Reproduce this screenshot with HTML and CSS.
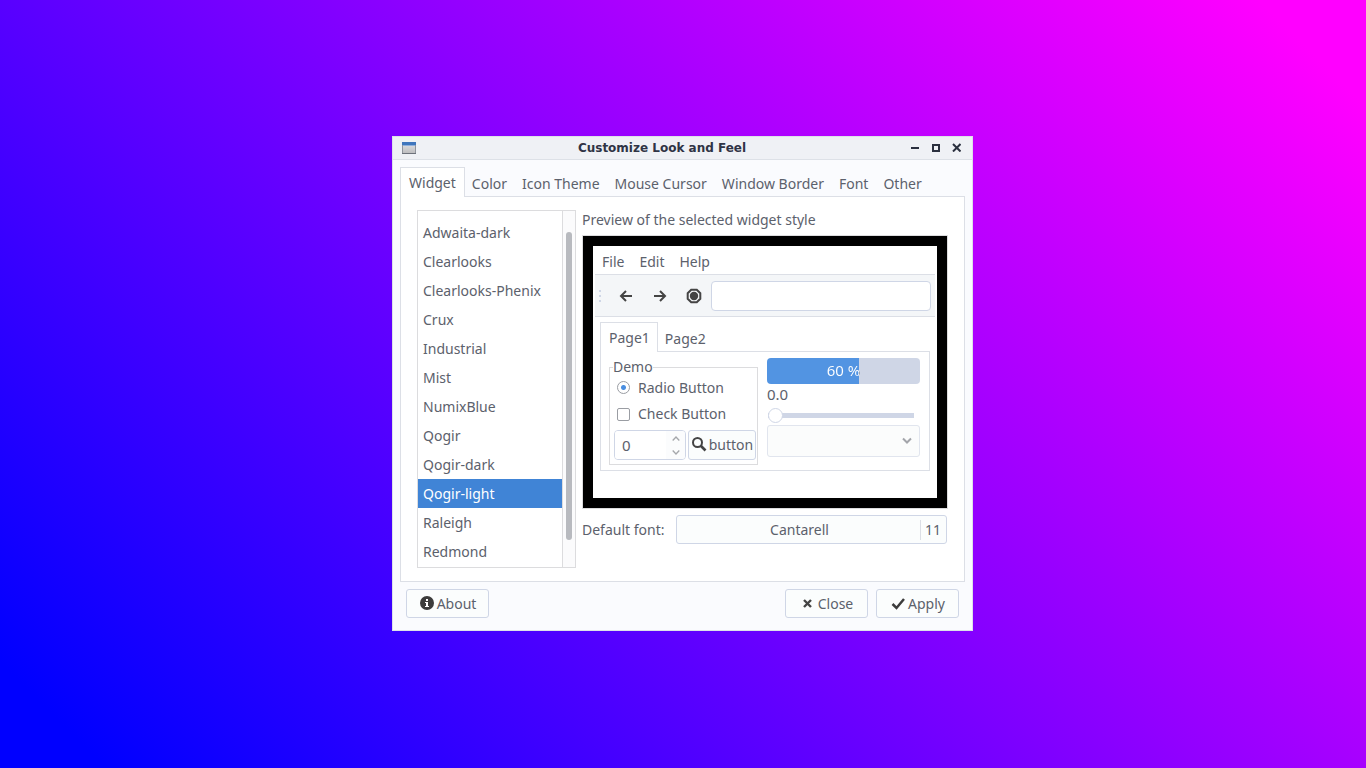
FILE: index.html
```html
<!DOCTYPE html>
<html lang="en">
<head>
<meta charset="utf-8">
<title>Customize Look and Feel</title>
<link rel="stylesheet" href="styles.css">
</head>
<body>
<main class="window">
  <header class="titlebar">
    <svg class="app-icon" width="14" height="14" viewBox="0 0 14 14" aria-hidden="true">
      <defs><linearGradient id="win" x1="0" y1="0" x2="0" y2="1"><stop offset="0" stop-color="#e4e4e6"/><stop offset="1" stop-color="#bcbcbe"/></linearGradient></defs>
      <rect x="0.5" y="1.500" width="13" height="11" fill="url(#win)" stroke="#8f949c"/>
      <path d="M0 12h14v1H0z" fill="#6d727b"/>
      <rect x="0" y="1" width="14" height="3" fill="#3f76bd"/>
      <rect x="1" y="4" width="12" height="1" fill="#8fb0dc"/>
    </svg>
    <h1 class="title">Customize Look and Feel</h1>
    <div class="window-controls">
      <button class="wm" aria-label="Minimize"><svg width="9" height="9" viewBox="0 0 9 9"><path d="M1 4h8v2H1z" fill="#2b303f"/></svg></button>
      <button class="wm" aria-label="Maximize"><svg width="9" height="9" viewBox="0 0 9 9"><path d="M2 2h6v6H2z" fill="none" stroke="#2b303f" stroke-width="2"/></svg></button>
      <button class="wm" aria-label="Close window"><svg width="9" height="9" viewBox="0 0 9 9"><path d="M1 1l7.500 7.500M8.500 1L1 8.500" stroke="#2b303f" stroke-width="2"/></svg></button>
    </div>
  </header>
  <div class="content">
    <nav class="tabs" role="tablist">
      <button class="tab active" role="tab" aria-selected="true">Widget</button>
      <button class="tab" role="tab">Color</button>
      <button class="tab" role="tab">Icon Theme</button>
      <button class="tab" role="tab">Mouse Cursor</button>
      <button class="tab" role="tab">Window Border</button>
      <button class="tab" role="tab">Font</button>
      <button class="tab" role="tab">Other</button>
    </nav>
    <section class="page">
      <div class="theme-list">
        <ul class="themes" role="listbox" aria-label="Widget style">
          <li role="option">Adwaita-dark</li>
          <li role="option">Clearlooks</li>
          <li role="option">Clearlooks-Phenix</li>
          <li role="option">Crux</li>
          <li role="option">Industrial</li>
          <li role="option">Mist</li>
          <li role="option">NumixBlue</li>
          <li role="option">Qogir</li>
          <li role="option">Qogir-dark</li>
          <li role="option" class="selected" aria-selected="true">Qogir-light</li>
          <li role="option">Raleigh</li>
          <li role="option">Redmond</li>
        </ul>
        <div class="scrollbar"><div class="thumb"></div></div>
      </div>
      <div class="details">
        <p class="caption">Preview of the selected widget style</p>
        <div class="preview">
          <nav class="menubar">
            <button class="menu">File</button>
            <button class="menu">Edit</button>
            <button class="menu">Help</button>
          </nav>
          <div class="toolbar">
            <svg class="grip" width="4" height="14" viewBox="0 0 4 14" aria-hidden="true"><path d="M1 1h2v2H1zM1 6h2v2H1zM1 11h2v2H1z" fill="#cfd6e6"/></svg>
            <button class="tool" aria-label="Back"><svg width="16" height="16" viewBox="0 0 16 16"><path d="M14 8H3M8 3L3 8l5 5" fill="none" stroke="#444" stroke-width="2"/></svg></button>
            <button class="tool" aria-label="Forward"><svg width="16" height="16" viewBox="0 0 16 16"><path d="M2 8h11M8 3l5 5-5 5" fill="none" stroke="#444" stroke-width="2"/></svg></button>
            <button class="tool" aria-label="Stop"><svg width="16" height="16" viewBox="0 0 16 16"><path d="M5.200 1.700h5.600l3.500 3.500v5.600l-3.500 3.500H5.200l-3.500-3.500V5.200z" fill="#f4f6f8" stroke="#444" stroke-width="2"/><circle cx="8" cy="8" r="4.200" fill="#444"/></svg></button>
            <input class="entry" type="text" aria-label="Address">
          </div>
          <div class="demo-notebook">
            <div class="tabs" role="tablist">
              <button class="tab active" role="tab" aria-selected="true">Page1</button>
              <button class="tab" role="tab">Page2</button>
            </div>
            <div class="demo-page">
              <fieldset class="demo">
                <legend>Demo</legend>
                <label class="choice"><input class="radio" type="radio" checked>Radio Button</label>
                <label class="choice"><input class="check" type="checkbox">Check Button</label>
                <div class="controls">
                  <div class="spin">
                    <input class="spin-value" type="text" value="0" aria-label="Value">
                    <div class="steps">
                      <button class="step" aria-label="Increase"><svg width="8" height="5" viewBox="0 0 8 5"><path d="M.700 4.500L4 1l3.300 3.500" fill="none" stroke="#a5a7ab" stroke-width="1.300"/></svg></button>
                      <button class="step" aria-label="Decrease"><svg width="8" height="5" viewBox="0 0 8 5"><path d="M.700.500L4 4 7.300.500" fill="none" stroke="#a5a7ab" stroke-width="1.300"/></svg></button>
                    </div>
                  </div>
                  <button class="button small"><svg width="16" height="16" viewBox="0 0 16 16"><circle cx="6.500" cy="5.500" r="4.500" fill="none" stroke="#444" stroke-width="2"/><path d="M9.500 8.500l5 5" stroke="#444" stroke-width="2.600"/></svg>button</button>
                </div>
              </fieldset>
              <div class="gauges">
                <div class="progress" role="progressbar" aria-valuenow="60"><span class="progress-text">60 %</span></div>
                <label class="scale-label" for="scale">0.0</label>
                <input class="scale" id="scale" type="range" value="0">
                <div class="combo-box">
                  <select class="combo" aria-label="Choice" disabled><option></option></select>
                  <svg class="combo-arrow" width="12" height="8" viewBox="0 0 12 8" aria-hidden="true"><path d="M2 1.500L6 5.500l4-4" fill="none" stroke="#a3a5aa" stroke-width="2"/></svg>
                </div>
              </div>
            </div>
          </div>
        </div>
        <div class="font-row">
          <span id="font-label">Default font:</span>
          <button class="button font-button" aria-labelledby="font-label"><span class="font-name">Cantarell</span><span class="font-size">11</span></button>
        </div>
      </div>
    </section>
    <footer class="actions">
      <button class="button about"><svg width="16" height="16" viewBox="0 0 16 16"><circle cx="8" cy="7" r="7" fill="#3c3c3c"/><path d="M7 3h2v2H7zM6 6h3v4h1v1H6v-1h1V7H6z" fill="#fff"/></svg>About</button>
      <button class="button"><svg width="16" height="16" viewBox="0 0 16 16"><path d="M4 4l7 7M11 4l-7 7" stroke="#444" stroke-width="2.400"/></svg>Close</button>
      <button class="button"><svg width="16" height="16" viewBox="0 0 16 16"><path d="M2.500 8l4 4L14 3" fill="none" stroke="#3c3c3c" stroke-width="2.500"/></svg>Apply</button>
    </footer>
  </div>
</main>
</body>
</html>
```
FILE: styles.css
```css
* { box-sizing: border-box; }

body {
  margin: 0;
  min-height: 100vh;
  padding: 0 1px 1px 0;
  display: flex;
  align-items: center;
  justify-content: center;
  background: linear-gradient(45deg, #00f 5%, #f0f 95%);
  color: #5c616c;
  font: 14px/20px "Noto Sans", sans-serif;
}

button, input, select {
  font: inherit;
  color: inherit;
}

button {
  margin: 0;
  padding: 0;
  border: 0;
  background: none;
  white-space: nowrap;
}

svg { flex: none; }

.window {
  width: 581px;
  max-width: 100%;
  border: 1px solid #dde1e9;
  background: #fafbfe;
}

.titlebar {
  display: flex;
  align-items: center;
  height: 23px;
  padding: 0 11px 0 9px;
  border-bottom: 1px solid #dde1e7;
  background: #eff1f5;
}

.title {
  flex: 1;
  margin: 0;
  padding-right: 2px;
  text-align: center;
  color: #2f3445;
  font: bold 12px/20px "DejaVu Sans", sans-serif;
}

.window-controls {
  display: flex;
  gap: 12px;
  padding-bottom: 2px;
}

.wm { display: flex; }

.content { padding: 7px 7px 12px; }

.tabs {
  display: flex;
  height: 30px;
  margin-bottom: -1px;
}

.tab {
  padding: 5px 7px 2px 8px;
}

.tab.active {
  position: relative;
  margin-right: -1px;
  padding: 2px 8px;
  border: 1px solid #dcdfe6;
  border-bottom: 0;
  background: #fff;
}

.page {
  display: flex;
  gap: 6px;
  padding: 13px 17px 13px 16px;
  border: 1px solid #dcdfe6;
  background: #fff;
}

.theme-list {
  display: flex;
  flex: none;
  width: 159px;
  border: 1px solid #dcdcde;
}

.themes {
  flex: 1;
  margin: 0;
  padding: 7px 0 1px;
  list-style: none;
}

.themes li {
  padding: 0 5px;
  line-height: 29px;
  white-space: nowrap;
}

.themes .selected {
  background: #4084d6;
  color: #fff;
}

.scrollbar {
  width: 13px;
  padding: 21px 3px 27px;
  border-left: 1px solid #dcdcde;
  background: #fbfbfc;
}

.thumb {
  height: 100%;
  border-radius: 3px;
  background: #b8babf;
}

.details {
  flex: 1;
  min-width: 0;
}

.caption { margin: 0; }

.preview {
  border: 10px solid #000;
  outline: 1px solid #dcdcde;
  margin: 6px 0 0 1px;
  padding: 0 2px 27px;
  background: #fff;
}

.menubar {
  display: flex;
  height: 29px;
  border-bottom: 1px solid #dcdfe6;
}

.menu { padding: 4px 8px 0 7px; }

.toolbar {
  display: flex;
  align-items: center;
  height: 42px;
  padding: 0 4px 0 3px;
  border-bottom: 1px solid #dcdfe6;
  background: #f4f6f8;
}

.tool {
  display: flex;
  justify-content: center;
  width: 34px;
}

.grip { margin-right: 7px; }

.entry {
  flex: 1;
  min-width: 0;
  height: 30px;
  padding: 0 8px;
  border: 1px solid #cfd6e6;
  border-radius: 4px;
  background: #fff;
}

.demo-notebook { padding: 5px 5px 0; }

.demo-notebook .tab.active { padding-right: 7px; }

.demo-page {
  display: flex;
  gap: 9px;
  padding: 5px 9px 5px 8px;
  border: 1px solid #dcdfe6;
}

.demo {
  width: 149px;
  margin: 0;
  padding: 0 1px 4px 4px;
  border: 1px solid #dcdcde;
}

.demo legend {
  margin-left: -1px;
  padding: 0;
}

.choice {
  display: flex;
  align-items: center;
  gap: 8px;
  padding-left: 3px;
  height: 21px;
}

.choice + .choice { height: 32px; }

.radio, .check {
  appearance: none;
  width: 13px;
  height: 13px;
  margin: 0;
  border: 1px solid #9a9da3;
  border-radius: 2px;
  background: #fff;
}

.radio {
  border-radius: 50%;
  background: radial-gradient(circle, #4a8ee0 2px, #fff 3px);
}

.controls { display: flex; gap: 2px; }

.spin {
  display: flex;
  width: 72px;
  height: 30px;
  border: 1px solid #cfd6e6;
  border-radius: 4px;
  overflow: hidden;
}

.spin-value {
  flex: 1;
  min-width: 0;
  padding: 0 7px;
  border: 0;
  font-size: 15px;
}

.steps {
  display: flex;
  flex-direction: column;
  width: 19px;
  background: #fbfcfd;
}

.step {
  display: flex;
  flex: 1;
  align-items: center;
  justify-content: center;
}

.gauges {
  display: flex;
  flex: 1;
  flex-direction: column;
  min-width: 0;
}

.progress {
  height: 26px;
  margin-top: 1px;
  border-radius: 4px;
  background: linear-gradient(to right, #5294e2 60%, #cfd6e6 60%);
  text-align: center;
}

.progress-text {
  display: block;
  line-height: 24px;
  font-size: 15px;
  background: linear-gradient(to right, #fff 60%, #5c616c 60%);
  background-clip: text;
  color: transparent;
}

.scale-label {
  padding-bottom: 2px;
  font-size: 15px;
  line-height: 20px;
}

.scale {
  appearance: none;
  width: 146px;
  height: 15px;
  margin: 2px 0 2px 1px;
  background: linear-gradient(#cfd6e6, #cfd6e6) center / 100% 5px no-repeat;
  border-radius: 3px;
}

.scale::-webkit-slider-thumb {
  appearance: none;
  width: 15px;
  height: 15px;
  border: 1px solid #cfd6e6;
  border-radius: 50%;
  background: #fff;
}

.combo-box {
  display: grid;
  align-items: center;
}

.combo, .combo-arrow { grid-area: 1 / 1; }

.combo {
  appearance: none;
  width: 100%;
  height: 32px;
  border: 1px solid #e1e5ee;
  border-radius: 3px;
  background: #fbfcfc;
  opacity: 1;
}

.combo-arrow {
  justify-self: end;
  margin-right: 7px;
  pointer-events: none;
}

.button {
  display: flex;
  align-items: center;
  justify-content: center;
  gap: 2px;
  width: 83px;
  height: 29px;
  border: 1px solid #cfd6e6;
  border-radius: 3px;
  background: #fbfdfd;
}

.button.small {
  width: 68px;
  height: 30px;
}

.font-row {
  display: flex;
  align-items: center;
  justify-content: space-between;
  margin-top: 7px;
}

.font-button { width: 271px; }

.font-name {
  flex: 1;
  padding-left: 4px;
}

.font-size {
  padding: 0 5px 0 4px;
  border-left: 1px solid #dcdfe6;
}

.actions {
  display: flex;
  gap: 8px;
  padding: 7px 6px 0;
}

.about { margin-right: auto; }
```
